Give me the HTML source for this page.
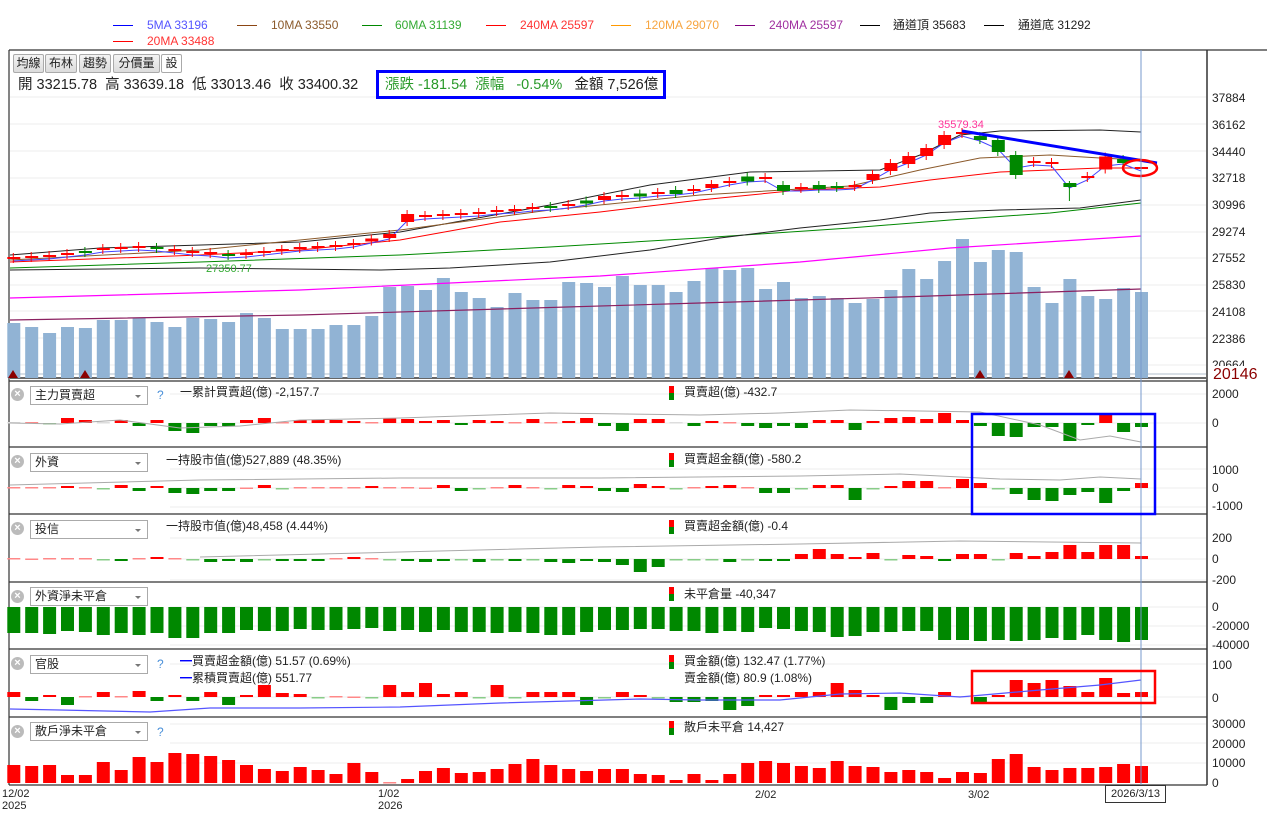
<!DOCTYPE html>
<html><head><meta charset="utf-8">
<style>
*{margin:0;padding:0;box-sizing:border-box}
body{width:1267px;height:815px;background:#fff;position:relative;overflow:hidden;font-family:"Liberation Sans","Noto Sans CJK TC",sans-serif;color:#222}
.t{position:absolute;white-space:nowrap;font-size:12px;line-height:14px}
.lg{position:absolute;height:1px;width:20px}
.btn{position:absolute;top:54px;height:19px;border:1px solid #aaa;background:linear-gradient(#f4f4f4,#dcdcdc);font-size:12px;line-height:17px;text-align:center;border-radius:2px}
.sel{position:absolute;left:30px;width:118px;height:19px;border:1px solid #aaa;background:#fff;font-size:12px;line-height:17px;padding-left:4px}
.sel:after{content:"";position:absolute;right:6px;top:8px;border:3px solid transparent;border-top:3px solid #777}
.x{position:absolute;left:11px;width:13px;height:13px;border-radius:50%;background:#bbb;color:#fff;font-size:11px;line-height:13px;text-align:center;font-weight:bold}
.q{position:absolute;left:157px;color:#4a90d9;font-size:12px}
.ax{position:absolute;left:1212px;font-size:12px;line-height:12px;color:#222}
.ic{position:absolute;width:5px;height:14px;background:linear-gradient(#f00 50%,#080 50%)}
</style></head><body>
<svg id="s" width="1267" height="815" style="position:absolute;left:0;top:0"></svg>

<div class="lg" style="left:113px;top:25px;background:#00f"></div><div class="t" style="left:147px;top:18px;color:#55f">5MA 33196</div>
<div class="lg" style="left:237px;top:25px;background:#8b4513"></div><div class="t" style="left:271px;top:18px;color:#8b5a2b">10MA 33550</div>
<div class="lg" style="left:362px;top:25px;background:#080"></div><div class="t" style="left:395px;top:18px;color:#3a3">60MA 31139</div>
<div class="lg" style="left:486px;top:25px;background:#f00"></div><div class="t" style="left:520px;top:18px;color:#f33">240MA 25597</div>
<div class="lg" style="left:611px;top:25px;background:#f90"></div><div class="t" style="left:645px;top:18px;color:#f7a540">120MA 29070</div>
<div class="lg" style="left:735px;top:25px;background:#800080"></div><div class="t" style="left:769px;top:18px;color:#a030a0">240MA 25597</div>
<div class="lg" style="left:860px;top:25px;background:#000"></div><div class="t" style="left:893px;top:18px">通道頂 35683</div>
<div class="lg" style="left:984px;top:25px;background:#000"></div><div class="t" style="left:1018px;top:18px">通道底 31292</div>
<div class="lg" style="left:113px;top:41px;background:#f00"></div><div class="t" style="left:147px;top:34px;color:#f33">20MA 33488</div>

<div class="btn" style="left:13px;width:31px">均線</div>
<div class="btn" style="left:45px;width:32px">布林</div>
<div class="btn" style="left:79px;width:32px">趨勢</div>
<div class="btn" style="left:113px;width:47px">分價量</div>
<div class="btn" style="left:161px;width:21px;background:#fff">設</div>
<div class="t" style="left:18px;top:77px;font-size:14.5px;line-height:17px">開 33215.78 &nbsp;高 33639.18 &nbsp;低 33013.46 &nbsp;收 33400.32</div>
<div style="position:absolute;left:376px;top:70px;width:290px;height:29px;border:3px solid #00f"></div>
<div class="t" style="left:385px;top:77px;font-size:14.5px;line-height:17px;color:#2a9a2a">漲跌 -181.54 &nbsp;漲幅 &nbsp;&nbsp;-0.54% &nbsp;&nbsp;<span style="color:#222">金額 7,526億</span></div>
<div class="t" style="left:938px;top:118px;color:#ff3399;font-size:11px">35579.34</div>
<div class="t" style="left:206px;top:262px;color:#3a3;font-size:11px">27350.77</div>

<div class="ax" style="top:92px">37884</div><div class="ax" style="top:119px">36162</div><div class="ax" style="top:146px">34440</div>
<div class="ax" style="top:172px">32718</div><div class="ax" style="top:199px">30996</div><div class="ax" style="top:226px">29274</div>
<div class="ax" style="top:252px">27552</div><div class="ax" style="top:279px">25830</div><div class="ax" style="top:306px">24108</div>
<div class="ax" style="top:333px">22386</div><div class="ax" style="top:359px;height:7px;overflow:hidden">20664</div>
<div class="ax" style="top:367px;font-size:16px;line-height:16px;color:#8b0000;left:1213px">20146</div>

<div class="x" style="top:388px">×</div><div class="sel" style="top:386px">主力買賣超</div><div class="q" style="top:388px">?</div>
<div class="t" style="left:180px;top:385px">一累計買賣超(億) -2,157.7</div>
<div class="ic" style="left:669px;top:386px"></div><div class="t" style="left:684px;top:385px">買賣超(億) -432.7</div>
<div class="ax" style="top:388px">2000</div><div class="ax" style="top:417px">0</div>
<div class="x" style="top:455px">×</div><div class="sel" style="top:453px">外資</div>
<div class="t" style="left:166px;top:453px">一持股市值(億)527,889 (48.35%)</div>
<div class="ic" style="left:669px;top:453px"></div><div class="t" style="left:684px;top:452px">買賣超金額(億) -580.2</div>
<div class="ax" style="top:464px">1000</div><div class="ax" style="top:482px">0</div><div class="ax" style="top:500px">-1000</div>
<div class="x" style="top:522px">×</div><div class="sel" style="top:520px">投信</div>
<div class="t" style="left:166px;top:519px">一持股市值(億)48,458 (4.44%)</div>
<div class="ic" style="left:669px;top:520px"></div><div class="t" style="left:684px;top:519px">買賣超金額(億) -0.4</div>
<div class="ax" style="top:532px">200</div><div class="ax" style="top:553px">0</div><div class="ax" style="top:574px">-200</div>
<div class="x" style="top:590px">×</div><div class="sel" style="top:587px">外資淨未平倉</div>
<div class="ic" style="left:669px;top:587px"></div><div class="t" style="left:684px;top:587px">未平倉量 -40,347</div>
<div class="ax" style="top:601px">0</div><div class="ax" style="top:620px">-20000</div><div class="ax" style="top:639px">-40000</div>
<div class="x" style="top:657px">×</div><div class="sel" style="top:655px">官股</div><div class="q" style="top:657px">?</div>
<div class="t" style="left:180px;top:654px"><span style="color:#00f">━</span>買賣超金額(億) 51.57 (0.69%)</div>
<div class="t" style="left:180px;top:671px"><span style="color:#00f">━</span>累積買賣超(億) 551.77</div>
<div class="ic" style="left:669px;top:655px"></div><div class="t" style="left:684px;top:654px">買金額(億) 132.47 (1.77%)</div>
<div class="t" style="left:684px;top:671px">賣金額(億) 80.9 (1.08%)</div>
<div class="ax" style="top:659px">100</div><div class="ax" style="top:692px">0</div>
<div class="x" style="top:725px">×</div><div class="sel" style="top:722px">散戶淨未平倉</div><div class="q" style="top:725px">?</div>
<div class="ic" style="left:669px;top:721px"></div><div class="t" style="left:684px;top:720px">散戶未平倉 14,427</div>
<div class="ax" style="top:718px">30000</div><div class="ax" style="top:738px">20000</div><div class="ax" style="top:757px">10000</div><div class="ax" style="top:777px">0</div>

<div class="t" style="left:2px;top:788px;font-size:11px;line-height:12px">12/02<br>2025</div>
<div class="t" style="left:378px;top:788px;font-size:11px;line-height:12px">1/02<br>2026</div>
<div class="t" style="left:755px;top:788px;font-size:11px">2/02</div>
<div class="t" style="left:968px;top:788px;font-size:11px">3/02</div>
<div class="t" style="left:1105px;top:785px;font-size:11px;border:1px solid #333;background:#fff;padding:1px 5px">2026/3/13</div>

<script>
var S=document.getElementById('s'),h='';
function X(i){return 1141-17.9*(63-i);}
function R(x,y,w,hh,c){h+='<rect x="'+x+'" y="'+y+'" width="'+w+'" height="'+hh+'" fill="'+c+'"/>';}
function L(x1,y1,x2,y2,c,w){h+='<line x1="'+x1+'" y1="'+y1+'" x2="'+x2+'" y2="'+y2+'" stroke="'+c+'" stroke-width="'+(w||1)+'"/>';}
function P(pts,c,w){var d=pts.map(function(p){return p[0]+','+p[1]}).join(' ');h+='<polyline points="'+d+'" fill="none" stroke="'+c+'" stroke-width="'+(w||1)+'"/>';}
[50,381,447,514,582,649,717,785].forEach(function(y,k){L(9,y,k==0?1267:1207,y,k==0?'#555':'#333',k==0?1.5:1.2);});
L(9,50,9,785,'#333',1.2);L(1207,50,1207,785,'#333',1.5);
[97,124,151,178,205,232,258,285,311,338,365].forEach(function(y){L(10,y,1206,y,'#eee');});
[394,423,469,488,507,538,559,580,607,626,645,664,697,724,743,763].forEach(function(y){L(170,y,1206,y,'#eee');});
L(10,378,1206,378,'#333',1.5);L(10,374,1206,374,'#9ab',0.8);
var vt=[323,327,333,327,328,320,320,318,322,327,318,319,322,313,318,329,329,329,325,325,316,287,286,290,278,292,298,307,293,300,300,282,283,287,276,285,285,292,281,268,270,268,289,282,298,296,298,303,299,290,269,279,261,239,262,250,252,287,303,279,296,299,288,292];
for(var i=0;i<64;i++)R(X(i)-6,vt[i],13,378-vt[i],'#91b3d4');
[13,85,980,1069].forEach(function(x){h+='<polygon points="'+(x-5)+',378 '+(x+5)+',378 '+x+',370" fill="#8b0000"/>';});
P([[10,320],[300,315],[700,303],[900,297],[1141,289]],'#8b2060',1.2);
P([[10,298],[300,290],[600,276],[800,262],[950,248],[1141,236]],'#f0f',1.2);
P([[10,268],[200,262],[400,255],[550,247],[700,238],[850,228],[950,220],[1050,213],[1141,203]],'#080',1);
P([[10,270],[200,268],[380,270],[450,268],[550,262],[650,250],[720,238],[800,228],[880,220],[930,213],[1000,210],[1080,208],[1141,200]],'#222',1);
P([[10,255],[100,248],[300,242],[400,232],[550,205],[650,185],[750,172],[880,170],[920,155],[960,135],[1000,131],[1100,130],[1141,132]],'#222',1);
P([[10,262],[200,255],[300,250],[400,240],[500,222],[600,212],[700,200],[800,190],[880,187],[930,180],[1000,172],[1100,168],[1141,168]],'#f00',1);
P([[10,260],[200,250],[400,230],[550,210],[700,195],[850,186],[920,170],[980,158],[1050,155],[1100,158],[1141,160]],'#8b5a2b',1);
var cy=[258,257,256,254,252,249,248,247,248,250,252,253,255,254,252,250,248,247,246,244,240,236,218,216,215,214,213,211,210,208,207,205,202,198,196,195,193,192,190,186,182,179,178,188,188,187,187,186,177,167,160,152,140,133,138,146,165,162,163,185,177,163,161,168];
var body=[0,2,0,2,-2,2,0,2,-2,0,2,0,-2,0,2,0,0,2,0,2,3,4,8,2,0,2,0,2,0,2,-2,2,-3,4,2,-3,2,-4,2,4,2,-5,2,-6,2,-4,-2,2,6,8,8,8,10,0,-4,-12,-20,0,0,-4,0,13,-4,0];
var bp=cy.map(function(v,i){return [X(i),v+3];});P(bp,'#44f',1);
for(var i=0;i<64;i++){var b=body[i],y=cy[i],c=b>=0?'#f00':'#080',hh=Math.max(2,Math.abs(b));
 L(X(i),y-hh/2-(i==59?2:4),X(i),y+hh/2+(i==59?14:4),c,1);R(X(i)-6,y-hh/2,13,hh,c);}
L(962,131,1157,163,'#00f',3);
h+='<ellipse cx="1140" cy="168" rx="17" ry="8" fill="none" stroke="#f00" stroke-width="2.5"/>';
function bars(z,v,sc){for(var i=0;i<64;i++){var a=v[i]*(sc||1);if(a==0||a===undefined){R(X(i)-6,z-1,13,1.5,'#ddd');continue;}var c=a>0?'#f00':'#080';if(Math.abs(a)<1.5)c=a>0?'#f88':'#8c8';R(X(i)-6,a>0?z-a:z,13,Math.max(1.5,Math.abs(a)),c);}}
bars(423,[0,1,-1,5,3,0,3,-3,3,-8,-10,-3,-3,3,5,1,3,3,3,2,1,5,4,2,3,-2,3,2,1,4,1,2,5,-3,-8,4,4,0,-3,2,1,-3,-5,-3,-5,3,3,-7,2,5,6,4,10,3,-3,-13,-14,-4,-4,-18,-2,8,-9,-4]);
bars(488,[1,1,1,2,1,-1,3,-3,2,-5,-6,-3,-3,0.5,3,-1,1,1,1,1,2,1,1,0.5,3,-3,-1,1,3,1,-1,3,2,-3,-4,4,2,-0.5,1,2,3,1,-5,-5,-1,3,3,-12,-1,2,7,7,1,9,5,-1,-6,-12,-13,-7,-4,-15,-3,5,-9,-8]);
bars(559,[1,0.5,1,1,1,-1,-2,1,2,1,-1,-3,-2,-3,-1,-2,-2,-2,1,2,1,-1,-2,-3,-2,-1,-3,-1,-2,-1,-3,-4,-2,-3,-6,-13,-8,-1,-1,-1,-3,-1,-2,-2,5,10,5,2,6,-0.5,4,3,-2,5,5,-0.5,6,3,7,14,7,14,14,3]);
bars(607,[-26,-26,-27,-24,-25,-28,-26,-28,-26,-31,-31,-26,-26,-23,-24,-24,-22,-23,-23,-22,-21,-24,-23,-25,-23,-25,-25,-26,-25,-26,-28,-28,-25,-23,-23,-22,-22,-24,-24,-26,-24,-25,-21,-22,-24,-25,-30,-29,-25,-25,-24,-24,-33,-33,-34,-33,-34,-33,-31,-33,-28,-33,-35,-33]);
bars(697,[5,-4,2,-8,1,5,1,6,-4,2,-4,5,-8,2,12,4,3,-1,1,0.5,-0.3,12,5,14,3,5,-0.5,12,-1,5,5,5,-8,-1,5,2,-1,-5,-5,-4,-13,-9,2,2,5,5,14,7,2,-13,-6,-6,5,0,-6,2,17,14,17,11,5,19,4,5]);
bars(783,[18,17,18,8,8,21,13,26,21,30,29,27,23,18,14,12,16,13,9,20,11,1,4,12,15,10,11,14,19,24,18,14,12,14,14,9,8,3,9,3,9,20,22,20,17,15,22,17,16,11,13,11,5,11,10,24,29,16,13,15,15,16,19,17]);
P([[10,423],[60,424],[120,420],[180,428],[240,426],[300,420],[400,418],[550,413],[700,415],[780,413],[850,410],[920,411],[980,412],[1040,425],[1080,440],[1110,436],[1141,442]],'#aaa',1);
P([[10,485],[200,480],[400,478],[600,478],[800,476],[900,474],[960,477],[1000,479],[1060,480],[1100,477],[1141,479]],'#aaa',1);
P([[200,557],[400,552],[600,547],[800,544],[960,541],[1141,543]],'#aaa',1);
P([[10,709],[60,710],[150,712],[210,708],[300,708],[400,707],[500,703],[640,699],[700,700],[780,700],[840,694],[900,693],[960,697],[1040,690],[1100,685],[1141,680]],'#55f',1.2);
L(1141,50,1141,785,'#7799cc',1);
h+='<rect x="972" y="414" width="183" height="100" fill="none" stroke="#00f" stroke-width="2.5"/>';
h+='<rect x="972" y="671" width="183" height="32" fill="none" stroke="#f00" stroke-width="2.5"/>';
S.innerHTML=h;
</script>
</body></html>
